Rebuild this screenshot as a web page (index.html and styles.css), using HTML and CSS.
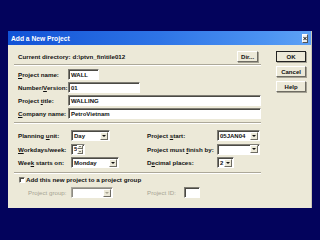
FILE: index.html
```html
<!DOCTYPE html>
<html>
<head>
<meta charset="utf-8">
<link rel="stylesheet" href="styles.css">
</head>
<body>
<div class="screen">
  <div class="dialog">
    <div class="titlebar">
      <span class="title">Add a New Project</span>
      <span class="close"><svg width="5" height="5" viewBox="0 0 5 5"><path d="M0.5 0.5L4.5 4.5M4.5 0.5L0.5 4.5" stroke="#000" stroke-width="1.2"/></svg></span>
    </div>
    <div class="content">
      <div class="main">
        <div class="dirrow">
          <span class="lbl">Current directory:</span>
          <span class="lbl path">d:\ptvn_fin\tile012</span>
          <span class="btn dirbtn">Dir...</span>
        </div>
        <div class="sep s1"></div>
        <div class="fields">
          <span class="lbl"><u>P</u>roject name:</span>
          <span class="field w31">WALL</span>
          <span class="lbl">Number/<u>V</u>ersion:</span>
          <span class="field w72">01</span>
          <span class="lbl">Project <u>t</u>itle:</span>
          <span class="field">WALLING</span>
          <span class="lbl"><u>C</u>ompany name:</span>
          <span class="field">PetroVietnam</span>
        </div>
        <div class="sep s2"></div>
        <div class="plan">
          <span class="lbl">Planning <u>u</u>nit:</span>
          <span class="combo w39"><span class="val">Day</span><span class="arrow"></span></span>
          <span class="lbl">Project <u>s</u>tart:</span>
          <span class="combo w43"><span class="val">05JAN04</span><span class="arrow"></span></span>

          <span class="lbl"><u>W</u>orkdays/week:</span>
          <span class="spin"><span class="val">5</span><span class="spinbtns"><span class="up"></span><span class="down"></span></span></span>
          <span class="lbl">Project must <u>f</u>inish by:</span>
          <span class="combo w43"><span class="val"></span><span class="arrow"></span></span>

          <span class="lbl">Wee<u>k</u> starts on:</span>
          <span class="combo w48"><span class="val">Monday</span><span class="arrow"></span></span>
          <span class="lbl">D<u>e</u>cimal places:</span>
          <span class="combo w17"><span class="val">2</span><span class="arrow"></span></span>
        </div>
        <div class="sep s3"></div>
        <div class="check">
          <span class="box"></span>
          <span class="lbl">Add this new project to a project group</span>
        </div>
        <div class="group">
          <span class="lbl dis glbl">Project group:</span>
          <span class="combo w42 disabled"><span class="val"></span><span class="arrow"></span></span>
          <span class="lbl dis idlbl">Project ID:</span>
          <span class="field idf"></span>
        </div>
      </div>
      <div class="buttons">
        <span class="btn ok">OK</span>
        <span class="btn">Cancel</span>
        <span class="btn">Help</span>
      </div>
    </div>
  </div>
</div>
</body>
</html>
```
FILE: styles.css
```css
* { box-sizing: border-box; margin: 0; padding: 0; }
html, body { width: 320px; height: 240px; overflow: hidden; }
body {
  background: #03035c;
  font-family: "Liberation Sans", Arial, sans-serif;
}
.screen { padding: 31px 8px 0 8px; }
.dialog {
  width: 304px;
  height: 177px;
  background: #ece9d8;
  display: flex;
  flex-direction: column;
  border-right: 1px solid #c9c6b6;
}
.titlebar {
  height: 14px;
  background: linear-gradient(to right, #1152d6 0%, #2e74e6 50%, #4c93f2 85%, #5fa2f5 100%);
  display: flex;
  align-items: center;
  justify-content: space-between;
  padding: 0 3px 0 3px;
}
.title {
  color: #fff;
  font-weight: bold;
  font-size: 6.7px;
}
.close {
  width: 6px;
  height: 9px;
  background: #f0f0f0;
  border: 1px solid;
  border-color: #fff #555 #555 #fff;
  display: flex;
  align-items: center;
  justify-content: center;
}
.close svg { display: block; }
.content {
  flex: 1;
  display: flex;
  padding: 6px 5px 0 6px;
}
.main { width: 248px; }
.lbl {
  font-size: 6.2px;
  font-weight: bold;
  color: #111;
  white-space: nowrap;
}
.lbl u { text-decoration-thickness: 0.5px; text-underline-offset: 1px; }
.dis { color: #a7a493; font-weight: normal; }
.dirrow {
  height: 11px;
  display: flex;
  align-items: center;
  padding-left: 4px;
  padding-right: 3px;
}
.path { margin-left: 2px; }
.btn {
  height: 11px;
  display: flex;
  align-items: center;
  justify-content: center;
  background: #ece9d8;
  border: 1px solid;
  border-color: #fff #6e6c63 #6e6c63 #fff;
  box-shadow: 1px 1px 0 #a5a294;
  font-size: 6px;
  font-weight: bold;
  color: #111;
}
.dirbtn { margin-left: auto; width: 21px; }
.buttons {
  margin-left: 15px;
  width: 30px;
  display: flex;
  flex-direction: column;
  gap: 4px;
}
.ok { outline: 1px solid #222; outline-offset: -1px; border-color: #fff #555 #555 #fff; }
.sep {
  height: 2px;
  border-top: 1px solid #aca899;
  border-bottom: 1px solid #fff;
}
.s1 { margin-top: 2px; }
.s2 { margin-top: 3px; }
.s3 { margin-top: 4px; }
.fields {
  display: grid;
  grid-template-columns: 50px 1fr;
  grid-auto-rows: 11px;
  row-gap: 2px;
  align-items: center;
  margin-top: 3px;
  padding-left: 4px;
}
.field, .combo, .spin {
  height: 11px;
  background: #fff;
  border: 1px solid;
  border-color: #7f7d74 #fff #fff #7f7d74;
  box-shadow: inset 1px 1px 0 #4a4944;
  font-size: 6px;
  font-weight: bold;
  color: #111;
  display: flex;
  align-items: center;
  padding-left: 2px;
  white-space: nowrap;
  overflow: hidden;
}
.w31 { width: 31px; }
.w72 { width: 72px; }
.w39 { width: 39px; }
.w43 { width: 43px; }
.w48 { width: 48px; }
.w17 { width: 17px; }
.w42 { width: 42px; }
.combo { padding-right: 1px; }
.combo .val { flex: 1; }
.arrow {
  width: 8px;
  height: 8px;
  background: #ece9d8;
  border: 1px solid;
  border-color: #fff #6e6c63 #6e6c63 #fff;
  display: flex;
  align-items: center;
  justify-content: center;
}
.arrow::after {
  content: "";
  border-left: 2px solid transparent;
  border-right: 2px solid transparent;
  border-top: 2px solid #111;
}
.disabled { border-color: #a9a79c #fff #fff #a9a79c; box-shadow: inset 1px 1px 0 #8d8b82; }
.disabled .arrow::after { border-top-color: #a7a493; }
.plan {
  display: grid;
  grid-template-columns: 53px 76px 70px 1fr;
  grid-auto-rows: 11px;
  row-gap: 2.5px;
  align-items: center;
  margin-top: 6px;
  padding-left: 4px;
}
.spin { width: 14px; padding-right: 1px; }
.spin .val { flex: 1; }
.spinbtns {
  width: 6px;
  height: 9px;
  display: flex;
  flex-direction: column;
}
.spinbtns span {
  flex: 1;
  background: #ece9d8;
  border: 1px solid;
  border-color: #fff #6e6c63 #6e6c63 #fff;
  display: flex;
  align-items: center;
  justify-content: center;
}
.spinbtns .up::after {
  content: "";
  border-left: 1.5px solid transparent;
  border-right: 1.5px solid transparent;
  border-bottom: 1.5px solid #111;
}
.spinbtns .down::after {
  content: "";
  border-left: 1.5px solid transparent;
  border-right: 1.5px solid transparent;
  border-top: 1.5px solid #111;
}
.check {
  height: 7px;
  display: flex;
  align-items: center;
  gap: 1px;
  margin-top: 2px;
  padding-left: 5px;
}
.box {
  width: 6px;
  height: 6px;
  background: #fff;
  border: 1px solid;
  border-color: #7f7d74 #fff #fff #7f7d74;
  box-shadow: inset 1px 1px 0 #4a4944;
}
.group {
  height: 11px;
  display: flex;
  align-items: center;
  margin-top: 4px;
  padding-left: 14px;
}
.glbl { width: 43px; }
.idlbl { width: 37px; margin-left: 34px; }
.idf { width: 16px; }
```
